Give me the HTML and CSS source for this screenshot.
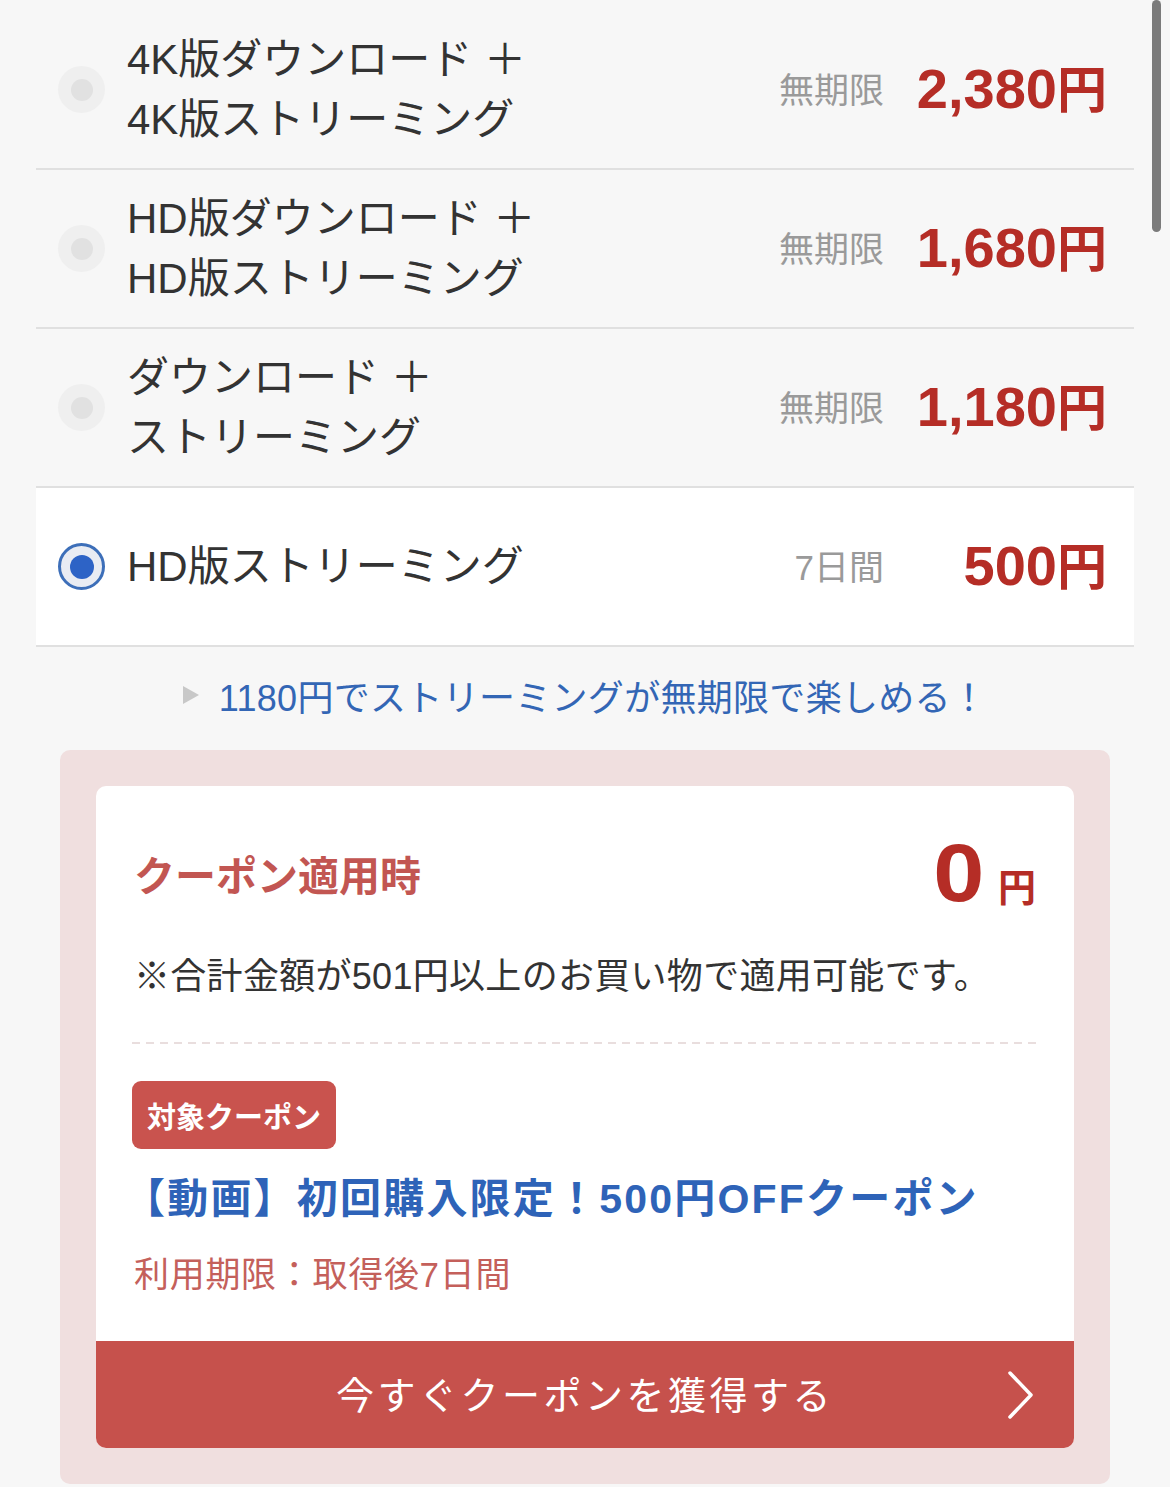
FILE: index.html
```html
<!DOCTYPE html>
<html lang="ja">
<head>
<meta charset="utf-8">
<link rel="stylesheet" href="styles.css">
</head>
<body>
<div class="page">
  <ul class="plans">
    <li class="plan">
      <span class="radio"><span class="dot"></span></span>
      <span class="label">4K版ダウンロード ＋<br>4K版ストリーミング</span>
      <span class="period">無期限</span>
      <span class="price">2,380<span class="yen">円</span></span>
    </li>
    <li class="plan">
      <span class="radio"><span class="dot"></span></span>
      <span class="label">HD版ダウンロード ＋<br>HD版ストリーミング</span>
      <span class="period">無期限</span>
      <span class="price">1,680<span class="yen">円</span></span>
    </li>
    <li class="plan">
      <span class="radio"><span class="dot"></span></span>
      <span class="label">ダウンロード ＋<br>ストリーミング</span>
      <span class="period">無期限</span>
      <span class="price">1,180<span class="yen">円</span></span>
    </li>
    <li class="plan selected">
      <span class="radio"><span class="dot"></span></span>
      <span class="label">HD版ストリーミング</span>
      <span class="period">7日間</span>
      <span class="price">500<span class="yen">円</span></span>
    </li>
  </ul>

  <div class="upsell">
    <span class="tri"></span>
    <span class="upsell-text">1180円でストリーミングが無期限で楽しめる！</span>
  </div>

  <div class="coupon-box">
    <div class="coupon-card">
      <div class="coupon-body">
        <div class="coupon-head">
          <span class="coupon-title">クーポン適用時</span>
          <span class="coupon-total"><span class="zero">0</span><span class="zero-yen">円</span></span>
        </div>
        <p class="coupon-note">※合計金額が501円以上のお買い物で適用可能です。</p>
        <div class="dash"></div>
        <span class="badge">対象クーポン</span>
        <p class="coupon-name">【動画】初回購入限定！500円OFFクーポン</p>
        <p class="coupon-exp">利用期限：取得後7日間</p>
      </div>
      <button class="coupon-btn">
        <span class="btn-text">今すぐクーポンを獲得する</span>
        <svg class="chev" width="30" height="50" viewBox="0 0 30 50"><path d="M4 3 L25 25 L4 47" fill="none" stroke="#fff" stroke-width="3.5" stroke-linecap="round" stroke-linejoin="round"/></svg>
      </button>
    </div>
  </div>
</div>
<div class="scrollbar"></div>
</body>
</html>
```

FILE: styles.css
```css
* { box-sizing: border-box; }
html, body {
  margin: 0;
  padding: 0;
  background: #f7f7f7;
}
body {
  font-family: "Liberation Sans", "Noto Sans CJK JP", sans-serif;
  color: #333;
  width: 1170px;
  height: 1487px;
  overflow: hidden;
}
.page {
  padding-top: 11px;
}
.plans {
  list-style: none;
  margin: 0 36px;
  padding: 0;
}
.plan {
  display: flex;
  align-items: center;
  height: 159px;
  border-bottom: 2px solid #e0e0e0;
  padding: 0 27px 0 22px;
}
.plan.selected {
  background: #fff;
}
.radio {
  width: 47px;
  height: 47px;
  border-radius: 50%;
  background: #efefef;
  display: flex;
  align-items: center;
  justify-content: center;
  flex-shrink: 0;
}
.radio .dot {
  width: 22px;
  height: 22px;
  border-radius: 50%;
  background: #e1e1e1;
}
.selected .radio {
  background: #e9ecf3;
  border: 3px solid #3d6fb9;
}
.selected .radio .dot {
  width: 24px;
  height: 24px;
  background: #2d63c6;
}
.label {
  margin-left: 22px;
  font-size: 42px;
  line-height: 60px;
  color: #333;
  flex: 1;
  white-space: nowrap;
}
.period {
  font-size: 35px;
  color: #9a9a9a;
  margin-right: 27px;
  margin-bottom: 4px;
}
.price {
  width: 196px;
  text-align: right;
  font-size: 56px;
  font-weight: 700;
  color: #b52d26;
  white-space: nowrap;
  margin-bottom: 8px;
}
.price .yen {
  font-family: "Noto Sans CJK JP", sans-serif;
  font-size: 50px;
}
.upsell {
  height: 103px;
  display: flex;
  align-items: center;
  justify-content: center;
  padding-bottom: 8px;
}
.tri {
  width: 0;
  height: 0;
  border-top: 9px solid transparent;
  border-bottom: 9px solid transparent;
  border-left: 16px solid #c8c8c8;
  margin-right: 20px;
}
.upsell-text {
  font-size: 36px;
  letter-spacing: 0.3px;
  color: #3366b5;
}
.coupon-box {
  margin: 0 60px;
  background: #f0dfdf;
  border-radius: 10px;
  padding: 36px;
}
.coupon-card {
  background: #fff;
  border-radius: 10px;
  overflow: hidden;
}
.coupon-body {
  padding: 42px 38px 41px 38px;
}
.coupon-head {
  display: flex;
  justify-content: space-between;
  align-items: center;
  height: 90px;
}
.coupon-title {
  font-family: "Noto Sans CJK JP", sans-serif;
  font-size: 41px;
  font-weight: 700;
  color: #c25652;
}
.coupon-total {
  display: flex;
  align-items: baseline;
  color: #b52d26;
}
.zero {
  font-size: 82px;
  font-weight: 700;
  line-height: 1;
  display: inline-block;
  transform: scaleX(1.12);
}
.zero-yen {
  font-family: "Noto Sans CJK JP", sans-serif;
  font-size: 38px;
  font-weight: 700;
  margin-left: 16px;
}
.coupon-note {
  margin: 34px 0 0 0;
  font-size: 36px;
  line-height: 50px;
  letter-spacing: 0.3px;
  color: #333;
}
.dash {
  margin-top: 40px;
  height: 2px;
  background-image: linear-gradient(to right, #e9dede 60%, transparent 60%);
  background-size: 14px 2px;
  margin-left: -2px;
}
.badge {
  display: inline-flex;
  align-items: center;
  margin-top: 37px;
  margin-left: -2px;
  height: 68px;
  padding: 0 15px;
  background: #c9534e;
  color: #fff;
  border-radius: 9px;
  font-family: "Noto Sans CJK JP", sans-serif;
  font-weight: 700;
  font-size: 29px;
}
.coupon-name {
  margin: 22px 0 0 -10px;
  font-size: 41px;
  line-height: 56px;
  font-weight: 700;
  letter-spacing: 2.2px;
  color: #2e63b8;
  white-space: nowrap;
}
.coupon-exp {
  margin: 23px 0 0 0;
  font-size: 35px;
  line-height: 50px;
  letter-spacing: 0.7px;
  color: #c4605b;
}
.coupon-btn {
  position: relative;
  display: flex;
  align-items: center;
  justify-content: center;
  width: 100%;
  height: 107px;
  border: 0;
  margin: 0;
  padding: 0 0 4px 0;
  background: #c6514c;
  font-family: "Liberation Sans", "Noto Sans CJK JP", sans-serif;
}
.btn-text {
  color: #fff;
  font-size: 38px;
  letter-spacing: 3.5px;
}
.chev {
  position: absolute;
  right: 38px;
  top: 29px;
}
.scrollbar {
  position: fixed;
  left: 1152px;
  top: 0;
  width: 9px;
  height: 232px;
  border-radius: 5px;
  background: #7b7b7b;
}
```
